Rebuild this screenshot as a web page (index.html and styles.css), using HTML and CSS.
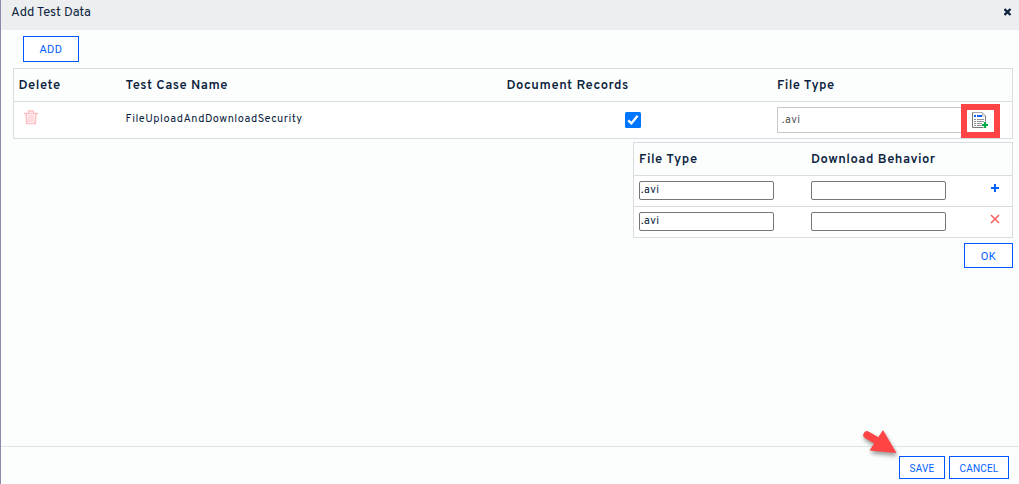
FILE: index.html
```html
<!DOCTYPE html>
<html lang="en">
<head>
<meta charset="utf-8">
<title>Add Test Data</title>
<link rel="stylesheet" href="styles.css">
</head>
<body>
<div class="dialog">
  <header class="header">
    <span class="title">Add Test Data</span>
    <svg class="close" width="8" height="8" viewBox="0 0 8 8"><path d="M.5 1L6.5 7M6.5 1L.5 7" stroke="#0c2340" stroke-width="2.3"/></svg>
  </header>
  <main class="content">
    <button class="btn add">ADD</button>
    <section class="table records">
      <div class="row head">
        <span class="h-delete">Delete</span><span class="h-name">Test Case Name</span><span class="h-doc">Document Records</span><span class="h-type">File Type</span>
      </div>
      <div class="row data">
        <svg class="trash" width="14" height="15" viewBox="0 0 14 15" fill="none" stroke="#ffc0c3"><path d="M0 3.5H14M4.5 3V1H9.5V3" stroke-width="1.3"/><path d="M2.2 4L2.8 13.5H11.2L11.8 4" stroke-width="1.7"/><path d="M5 5V12M7 5V12M9 5V12" stroke-width="1.2"/></svg>
        <span class="name">FileUploadAndDownloadSecurity</span>
        <svg class="check" width="16" height="16" viewBox="0 0 16 16"><rect width="16" height="16" rx="1.5" fill="#0075ff"/><path d="M3.2 8.3L6.4 11.4L12.6 3.8" fill="none" stroke="#fff" stroke-width="2.3"/></svg>
        <div class="type">
          <div class="type-value"><span class="avi">.avi</span></div>
          <div class="highlight">
            <svg width="17" height="17" viewBox="0 0 17 17"><path d="M.5.5H10.5L13.5 3.5V15.5H.5Z" fill="#fff" stroke="#777"/><path d="M1 .5H10" stroke="#aaa"/><path d="M10 0H14V4Z" fill="#fff"/><path d="M10.5.5V4H13.5Z" fill="#eee" stroke="#bbb"/><path d="M2 4H4M5 4H10" stroke="#0b62f5" stroke-width="2"/><path d="M2 7.5H4M5 7.5H12M2 9.5H4M5 9.5H12M2 11.5H4M5 11.5H10M2 13.5H4M5 13.5H10" stroke="#929292"/><path d="M13 9.5V16.5M9.5 13H16.5" stroke="#fff" stroke-width="3"/><path d="M13 10V16M10 13H16" stroke="#00ad45" stroke-width="2.2"/></svg>
          </div>
        </div>
      </div>
    </section>
    <section class="table behaviors">
      <div class="row head"><span class="b-type">File Type</span><span class="b-behavior">Download Behavior</span></div>
      <div class="row entry">
        <div class="field"><span class="avi">.avi</span></div><div class="field"></div>
        <svg width="10" height="10" viewBox="0 0 10 10"><path d="M5 1V9M1 5H9" stroke="#0061ff" stroke-width="2"/></svg>
      </div>
      <div class="row entry">
        <div class="field"><span class="avi">.avi</span></div><div class="field"></div>
        <svg width="10" height="10" viewBox="0 0 10 10"><path d="M1 1L9 9M9 1L1 9" stroke="#ff5a5c" stroke-width="1.5"/></svg>
      </div>
    </section>
    <button class="btn ok">OK</button>
  </main>
  <footer class="footer">
    <button class="btn small save">SAVE</button>
    <button class="btn small cancel">CANCEL</button>
    <svg class="pointer" width="42" height="34" viewBox="0 0 42 34"><path d="M5 6L19 14" stroke="#fe4445" stroke-width="7.5" stroke-linecap="round"/><path d="M21 1L34.5 24L7.5 21.5Z" fill="#fe4445"/></svg>
  </footer>
</div>
</body>
</html>
```
FILE: styles.css
```css
* { box-sizing: border-box; }
body { margin: 0; overflow: hidden; background: #fcfefd; color: #0c2340; font: 12px Overpass, Roboto, sans-serif; }
.dialog { height: 484px; border-left: 1px solid #858ba8; display: flex; flex-direction: column; }
.header { height: 30px; flex: none; background: #eceeef; display: flex; justify-content: space-between; padding: 8px 7px 0 10px; line-height: 11px; }
.title { font-size: 13px; }
.content { height: 416px; padding: 6px 6px 0 12px; display: flex; flex-direction: column; flex: none; }
.btn { display: flex; align-items: center; justify-content: center; padding: 1px 0 0; background: #fff; border: 1px solid #0057ff; color: #0061ff; font: 11px Roboto, sans-serif; letter-spacing: .5px; flex: none; }
.add { width: 56px; height: 26px; margin-left: 10px; }
.table { border: 1px solid #d8dbdf; flex: none; }
.row { display: flex; }
.row + .row { border-top: 1px solid #d8dbdf; background: #fff; }
.head { height: 32px; align-items: center; padding-top: 2px; font-size: 13px; font-weight: 600; white-space: nowrap; }
.records { margin-top: 6px; height: 71px; }
.records .head { padding-left: 4.5px; }
.h-delete { width: 107px; letter-spacing: .55px; }
.h-name { width: 381px; letter-spacing: .55px; }
.h-doc { width: 270.5px; letter-spacing: .55px; }
.h-type { letter-spacing: .4px; }
.data { height: 37px; padding-left: 10px; }
.trash { margin: 8px 88px 0 0; }
.name { width: 499px; margin: 11px 0 0 -.5px; line-height: 13px; font-size: 11px; letter-spacing: .5px; }
.check { margin: 10px 0 0 .5px; }
.type { display: flex; margin: 2px 0 0 136px; }
.type-value { width: 184px; height: 26px; margin-top: 3px; border: 1px solid #c9c9c9; border-right: 0; padding: 0 0 0 4px; color: #555; line-height: 24px; }
.avi { font-size: 11px; letter-spacing: .5px; }
.highlight { width: 39px; height: 34px; border: 6px solid #fe4445; padding: 2px 0 0 5px; background: #fff; line-height: 0; }
.behaviors { width: 380px; height: 96px; margin-top: 3px; align-self: flex-end; }
.behaviors .head { padding-left: 5px; }
.b-type { width: 172px; letter-spacing: .5px; }
.b-behavior { letter-spacing: .5px; }
.entry { height: 31px; padding: 5px 11px 0 5px; }
.field { width: 135px; height: 19px; margin-right: 37px; border: 1px solid #767676; border-radius: 2px; padding-left: 1px; line-height: 16px; flex: none; }
.entry svg { margin: 2px 0 0 7px; }
.ok { width: 49px; height: 25px; margin-top: 5px; align-self: flex-end; }
.footer { height: 38px; border-top: 1px solid #e0e2e4; padding: 9px 10px 0; display: flex; justify-content: flex-end; gap: 4px; position: relative; flex: none; }
.small { height: 23px; font-size: 10px; letter-spacing: .2px; }
.save { width: 46px; }
.cancel { width: 60px; }
.pointer { position: absolute; left: 861px; top: -18px; filter: drop-shadow(1px 3px 2px #0006); }
```
